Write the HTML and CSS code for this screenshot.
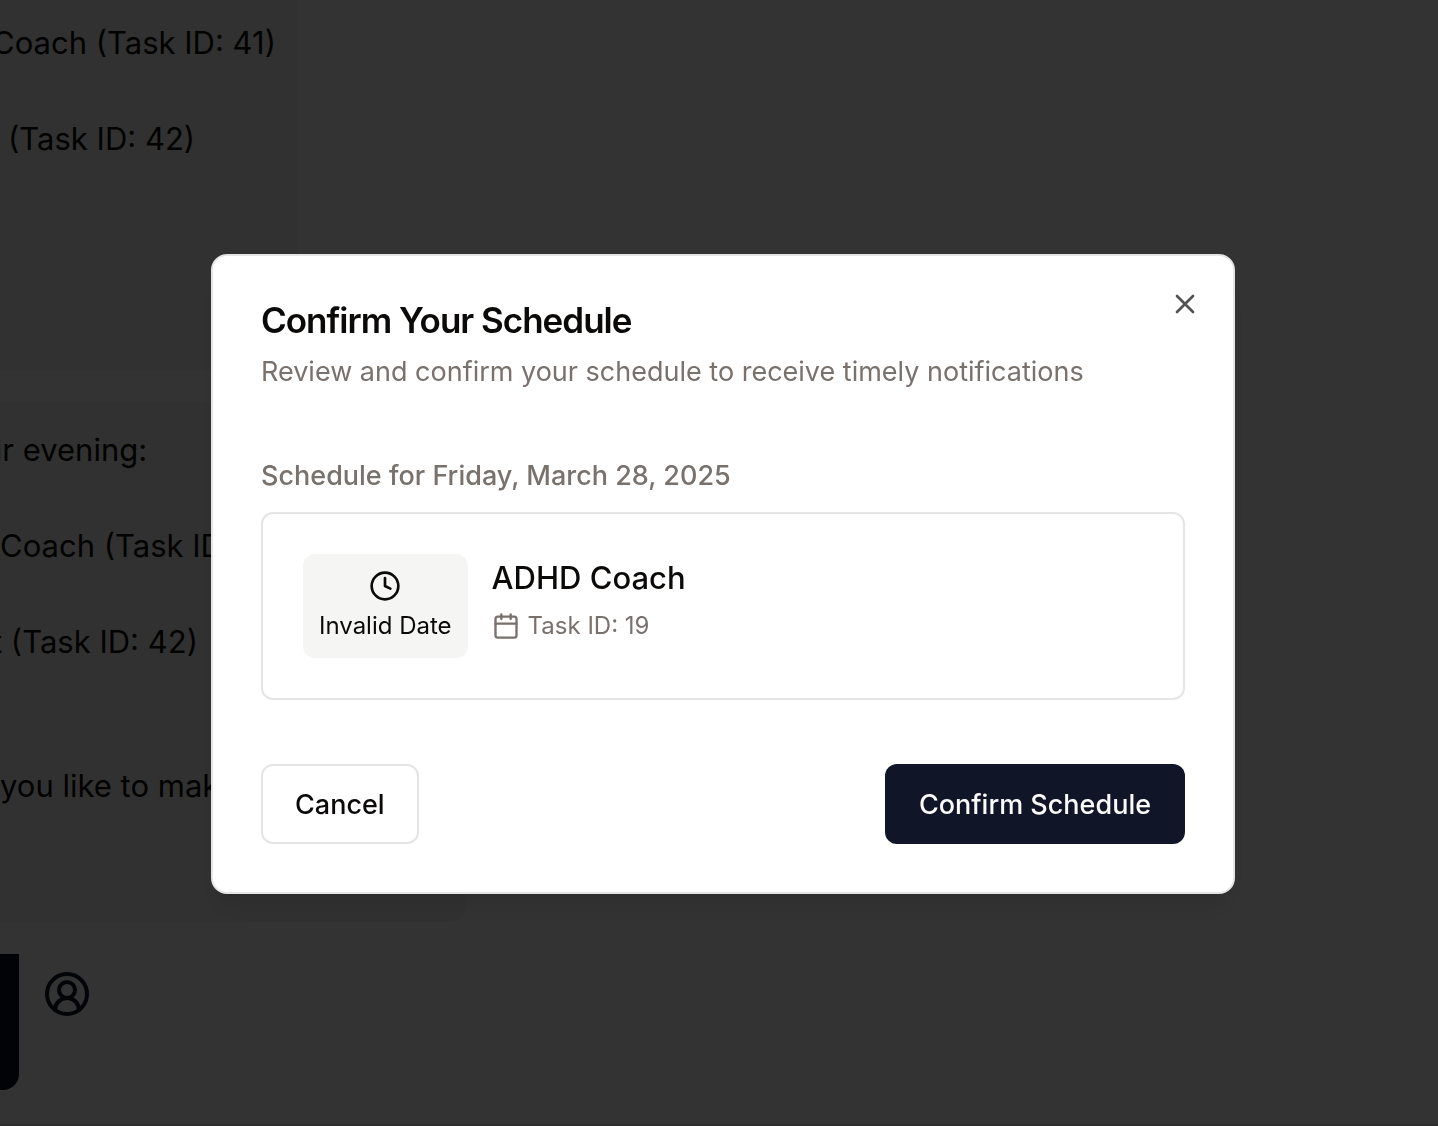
FILE: index.html
```html
<!DOCTYPE html>
<html lang="en">
<head>
<meta charset="utf-8">
<meta name="viewport" content="width=device-width, initial-scale=1">
<title>Confirm Your Schedule</title>
<link rel="stylesheet" href="styles.css">
</head>
<body>
<main class="chat">
  <section class="bubble bubble-first">
    <p>Coach (Task ID: 41)</p>
    <p class="indent">(Task ID: 42)</p>
  </section>
  <section class="bubble bubble-second">
    <p class="outdent">ur evening:</p>
    <p class="nudge">Coach (Task ID: 41)</p>
    <p>t (Task ID: 42)</p>
    <p class="nudge question">you like to make</p>
  </section>
  <div class="user-row">
    <div class="user-bubble"></div>
    <svg class="avatar" viewBox="0 0 24 24" aria-hidden="true"><path d="M18 20a6 6 0 0 0-12 0"/><circle cx="12" cy="10" r="4"/><circle cx="12" cy="12" r="10"/></svg>
  </div>
  <footer class="composer"></footer>
</main>
<div class="overlay">
  <div class="dialog" role="dialog" aria-modal="true" aria-labelledby="dialog-title" aria-describedby="dialog-text">
    <button class="close" type="button" aria-label="Close"><svg viewBox="0 0 24 24" aria-hidden="true"><path d="M18 6 6 18M6 6l12 12"/></svg></button>
    <header class="dialog-header">
      <h1 id="dialog-title">Confirm Your Schedule</h1>
      <p id="dialog-text">Review and confirm your schedule to receive timely notifications</p>
    </header>
    <section class="schedule">
      <h2>Schedule for Friday, March 28, 2025</h2>
      <article class="task">
        <div class="time">
          <svg viewBox="0 0 24 24" aria-hidden="true"><circle cx="12" cy="12" r="10"/><path d="M12 6v6l4 2"/></svg>
          <span>Invalid Date</span>
        </div>
        <div class="info">
          <h3>ADHD Coach</h3>
          <p><svg viewBox="0 0 24 24" aria-hidden="true"><path d="M8 2v4M16 2v4M3 10h18"/><rect x="3" y="4" width="18" height="18" rx="2"/></svg>Task ID: 19</p>
        </div>
      </article>
    </section>
    <footer class="actions">
      <button class="btn btn-outline" type="button">Cancel</button>
      <button class="btn btn-primary" type="button">Confirm Schedule</button>
    </footer>
  </div>
</div>
</body>
</html>
```

FILE: styles.css
```css
*, *::before, *::after { box-sizing: border-box; }
body, h1, h2, h3, p { margin: 0; }
body {
  font-family: Inter, "Liberation Sans", sans-serif;
  color: #0c0a09;
  background: #fff;
}
svg {
  fill: none;
  stroke: currentColor;
  stroke-width: 2;
  stroke-linecap: round;
  stroke-linejoin: round;
}
button { font: inherit; cursor: pointer; }

/* Conversation behind the dialog */
.chat {
  display: flex;
  flex-direction: column;
  align-items: flex-start;
  gap: 32px;
  height: 100vh;
  overflow: hidden;
}
.bubble {
  display: flex;
  flex-direction: column;
  gap: 48px;
  flex-shrink: 0;
  margin-left: -24px;
  padding: 24px 16px;
  background: #f5f5f4;
  border-radius: 0 16px 16px 0;
  font-size: 31px;
  line-height: 48px;
  white-space: nowrap;
}
.bubble-first { width: 322px; height: 370px; padding-top: 19px; border-radius: 0; }
.bubble-second { width: 490px; height: 520px; }
.outdent { margin-left: -8px; }
.nudge { margin-left: 8px; }
.indent { margin-left: 16px; }
.question { margin-top: 48px; }
.user-row { display: flex; gap: 24px; flex-shrink: 0; }
.user-bubble {
  width: 19px;
  height: 136px;
  background: #0b1020;
  border-radius: 0 0 16px 0;
}
.avatar { width: 48px; height: 48px; margin-top: 16px; color: #0f172a; }
.composer { align-self: stretch; border-top: 2px solid #e5e5e5; margin-top: 2px; }

/* Dialog */
.overlay {
  position: fixed;
  inset: 0;
  display: flex;
  align-items: center;
  justify-content: center;
  padding: 22px 0 0 8px;
  background: rgba(0, 0, 0, 0.8);
}
.dialog {
  position: relative;
  display: flex;
  flex-direction: column;
  gap: 64px;
  width: 100%;
  max-width: 1024px;
  padding: 48px;
  background: #fff;
  border: 2px solid #e5e5e5;
  border-radius: 16px;
  box-shadow: 0 20px 30px -6px rgba(0, 0, 0, 0.1), 0 8px 12px -8px rgba(0, 0, 0, 0.1);
}
.close {
  position: absolute;
  top: 32px;
  right: 32px;
  display: flex;
  padding: 0;
  border: 0;
  background: none;
  color: #0c0a09;
  opacity: 0.7;
}
.close svg { width: 32px; height: 32px; }
.dialog-header { display: flex; flex-direction: column; gap: 16px; }
h1 { font-size: 35px; font-weight: 600; line-height: 32px; letter-spacing: -1px; }
.dialog-header p { font-size: 27px; line-height: 40px; color: #78716c; }
.schedule { display: flex; flex-direction: column; gap: 16px; }
h2 { font-size: 27px; font-weight: 500; line-height: 40px; color: #78716c; }
.task {
  display: flex;
  gap: 24px;
  padding: 40px;
  border: 2px solid #e5e5e5;
  border-radius: 12px;
}
.time {
  display: flex;
  flex-direction: column;
  align-items: center;
  gap: 8px;
  min-width: 164px;
  padding: 16px;
  background: #f5f5f4;
  border-radius: 12px;
  font-size: 24px;
  line-height: 32px;
}
.time svg { width: 32px; height: 32px; }
.info { display: flex; flex-direction: column; gap: 8px; }
h3 { font-size: 31px; font-weight: 500; line-height: 48px; }
.info p {
  display: flex;
  align-items: center;
  gap: 8px;
  font-size: 24px;
  line-height: 32px;
  color: #78716c;
}
.info svg { width: 28px; height: 28px; }
.actions { display: flex; justify-content: space-between; }
.btn {
  height: 80px;
  padding: 0 32px;
  border-radius: 12px;
  font-size: 27px;
  font-weight: 500;
}
.btn-outline { border: 2px solid #e5e5e5; background: #fff; color: #0c0a09; }
.btn-primary { min-width: 300px; border: 0; background: #101527; color: #fafafa; }
```
